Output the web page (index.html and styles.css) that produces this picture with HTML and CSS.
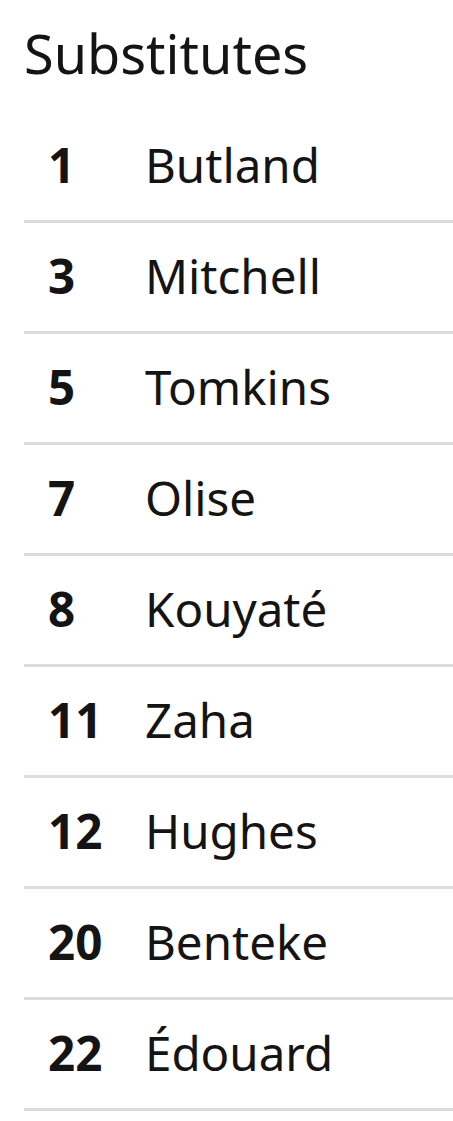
FILE: index.html
```html
<!DOCTYPE html>
<html lang="en">
<head>
<meta charset="utf-8">
<link rel="stylesheet" href="styles.css">
</head>
<body>
<section class="subs">
  <h2 class="subs-title">Substitutes</h2>
  <ul class="subs-list">
    <li class="row"><span class="num">1</span><span class="name">Butland</span></li>
    <li class="row"><span class="num">3</span><span class="name">Mitchell</span></li>
    <li class="row"><span class="num">5</span><span class="name">Tomkins</span></li>
    <li class="row"><span class="num">7</span><span class="name">Olise</span></li>
    <li class="row"><span class="num">8</span><span class="name">Kouyaté</span></li>
    <li class="row"><span class="num">11</span><span class="name">Zaha</span></li>
    <li class="row"><span class="num">12</span><span class="name">Hughes</span></li>
    <li class="row"><span class="num">20</span><span class="name">Benteke</span></li>
    <li class="row"><span class="num">22</span><span class="name">Édouard</span></li>
  </ul>
</section>
</body>
</html>
```

FILE: styles.css
```css
html, body {
  margin: 0;
  padding: 0;
  background: #fff;
}
body {
  font-family: "Noto Sans", "Open Sans", sans-serif;
  color: #141414;
}
.subs {
  padding-left: 24px;
}
.subs-title {
  margin: 0;
  height: 112px;
  box-sizing: border-box;
  padding-top: 18px;
  font-size: 54px;
  font-weight: 400;
  line-height: 70px;
}
.subs-list {
  list-style: none;
  margin: 0;
  padding: 0;
}
.row {
  display: flex;
  align-items: center;
  height: 111px;
  box-sizing: border-box;
  padding-bottom: 4px;
  border-bottom: 3px solid #dcdcdc;
  font-size: 47.5px;
}
.num {
  width: 121px;
  padding-left: 24px;
  box-sizing: border-box;
  font-weight: 700;
}
.name {
  font-weight: 400;
}
```
